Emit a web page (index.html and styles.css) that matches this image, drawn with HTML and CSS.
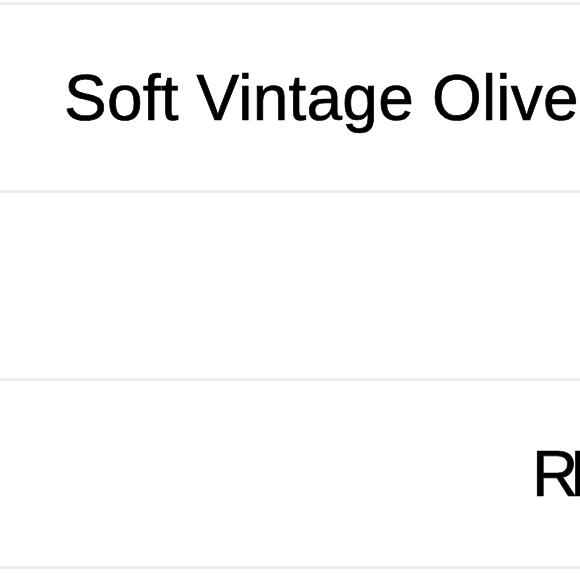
FILE: index.html
```html
<!DOCTYPE html>
<html>
<head>
<meta charset="utf-8">
<link rel="stylesheet" href="styles.css">
</head>
<body>
<div class="table">
  <div class="row">
    <div class="cell name">Soft Vintage Olive</div>
  </div>
  <div class="row">
    <div class="cell"></div>
  </div>
  <div class="row">
    <div class="cell value">RE</div>
  </div>
  <div class="row"></div>
</div>
</body>
</html>
```
FILE: styles.css
```css
html, body {
  margin: 0;
  padding: 0;
  background: #ffffff;
  overflow: hidden;
}
body {
  font-family: "Liberation Sans", Arial, sans-serif;
  color: #000;
  width: 580px;
  height: 580px;
}
.table {
  padding-top: 2px;
  display: flex;
  flex-direction: column;
}
.row {
  border-top: 3px solid #ebedec;
  height: 185px;
  display: flex;
  align-items: center;
  overflow: hidden;
  white-space: nowrap;
}
.cell {
  font-size: 64px;
  line-height: 1;
  -webkit-text-stroke: 0.7px #000;
}
.name {
  padding-left: 64px;
  letter-spacing: 0.2px;
}
.value {
  padding-left: 532px;
  letter-spacing: -8px;
}
```
